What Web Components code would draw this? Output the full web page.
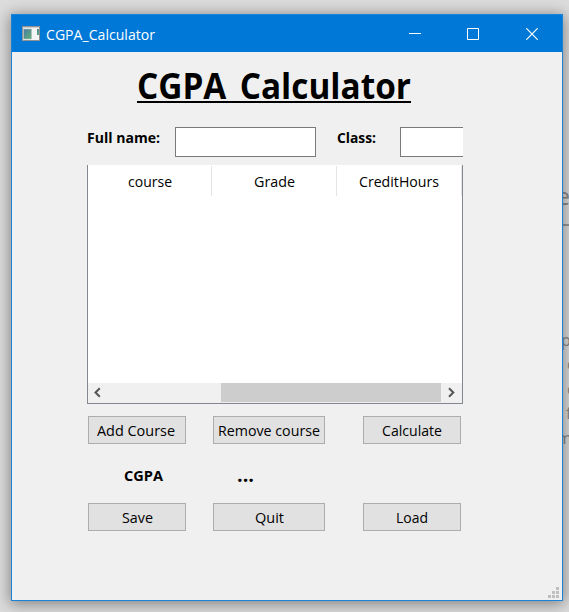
<!DOCTYPE html>
<html lang="en"><head><meta charset="utf-8"><title>CGPA_Calculator</title>
<style>
html,body{margin:0;height:100%;overflow:hidden}
body{font:15px/20px "Open Sans","Noto Sans",sans-serif;color:#000}
</style></head><body>
<cgpa-desktop></cgpa-desktop>
<script>
const define=(name,html,after)=>customElements.define(name,class extends HTMLElement{
  connectedCallback(){
    if(this.shadowRoot)return;
    this.attachShadow({mode:'open'}).innerHTML=html;
    if(after)after(this);
  }
});

/* Text condensed or widened to the width in its "w" attribute */
define('fit-text',`<style>:host{display:block;white-space:nowrap;overflow:visible}span{display:inline-block;transform-origin:0 50%}</style><span><slot></slot></span>`,el=>{
  const w=+el.getAttribute('w'),s=el.shadowRoot.querySelector('span');
  el.style.width=w+'px';
  s.style.transform='scaleX('+w/s.getBoundingClientRect().width+')';
});

define('push-button',`<style>:host{display:flex;box-sizing:border-box;height:28px;border:1px solid #adadad;background:#e1e1e1;align-items:center;justify-content:center}</style><slot></slot>`);

define('line-edit',`<style>:host{display:block;box-sizing:border-box;height:30px;border:1px solid #7a7a7a;background:#fff}:host([cut]){border-right:0}</style>`);

define('title-bar',`<style>
:host{display:flex;height:37px;background:#0078d7;color:#fff;align-items:center;padding:0 9px 0 10px}
.app{margin-right:6px}.min{margin-left:auto}.max{margin-left:46px}.x{margin-left:47px}svg{display:block;flex:none}
</style>
<svg class="app" width="18" height="15" viewBox="0 0 18 15"><defs><linearGradient id="g" x1="0" y1="0" x2="1" y2="1"><stop stop-color="#4779a4"/><stop offset="1" stop-color="#63b477"/></linearGradient></defs><rect width="18" height="15" fill="#929292"/><rect x="1" y="1" width="16" height="13" fill="#f4f4f4"/><rect x="1" y="1" width="16" height="1" fill="#ccc"/><rect x="1.5" y="3" width="8" height="10" fill="url(#g)" stroke="#b3bdc0" stroke-width=".6"/><rect x="15" y="3" width="2" height="6" fill="url(#g)"/></svg>
<fit-text w="109">CGPA_Calculator</fit-text>
<svg class="min" width="12" height="12"><path d="M0 5.5H12" stroke="#fff"/></svg>
<svg class="max" width="12" height="12"><path d="M.5.5H11.5V11.5H.5Z" fill="none" stroke="#fff"/></svg>
<svg class="x" width="12" height="12" style="margin-right:15px"><path d="M.3.3 11.7 11.7M11.7.3.3 11.7" stroke="#fff" stroke-width="1.2"/></svg>`);

define('scroll-bar',`<style>
:host{display:flex;height:20px;background:#f0f0f0;box-sizing:border-box;padding-bottom:1px}
i{display:block;margin-left:112px;width:220px;background:#cdcdcd}
svg{display:block;flex:none}
</style>
<svg width="21" height="19"><path d="M12.3 5.3 8 9.5 12.3 13.7" transform="translate(-.5 0)" fill="none" stroke="#555" stroke-width="2"/></svg><i></i>
<svg width="21" height="19"><path d="M8 5.3 12.3 9.5 8 13.7" fill="none" stroke="#555" stroke-width="2"/></svg>`);

define('course-table',`<style>
:host{display:flex;flex-direction:column;box-sizing:border-box;height:239px;border:1px solid #828790;border-top:0;background:#fff}
header{display:flex;height:30px;margin-top:1px}
header div{box-sizing:border-box;width:125px;border-right:1px solid #e5e5e5;display:flex;align-items:center;justify-content:center}
header div:first-child{width:124px}
scroll-bar{margin-top:auto}
</style>
<header><div><fit-text w="44">course</fit-text></div><div><fit-text w="41">Grade</fit-text></div><div><fit-text w="80">CreditHours</fit-text></div></header>
<scroll-bar></scroll-bar>`);

define('calculator-form',`<style>
:host{display:block;padding:13px 0 0 75px;width:376px}
h1{margin:0 0 23px 50px;width:274px;height:39px;box-sizing:border-box;font-size:36px;line-height:41px;word-spacing:5px;background:linear-gradient(#000,#000) 0 36px/274px 2px no-repeat}
b{font-weight:700}
.fields{display:grid;grid-template-columns:88px 141px 21px 63px 63px;height:38px;align-items:start}
.fields>:nth-child(3){grid-column:4}
.buttons{display:grid;grid-template-columns:98px 112px 98px;column-gap:27px;margin:12px 0 0 1px}
.buttons>:last-child{margin-left:11px;margin-right:-11px}
.add{padding-right:3px}
.result{display:flex;height:20px;margin:21px 0 0 37px;font-weight:700}
.dots{margin-left:74px;font-size:20px;line-height:20px}
.bottom{margin-top:18px}
</style>
<h1><fit-text w="274">CGPA Calculator</fit-text></h1>
<div class="fields"><b><fit-text w="73">Full name:</fit-text></b><line-edit></line-edit><b><fit-text w="39">Class:</fit-text></b><line-edit cut></line-edit></div>
<course-table></course-table>
<div class="buttons"><push-button class="add"><fit-text w="78">Add Course</fit-text></push-button><push-button><fit-text w="102">Remove course</fit-text></push-button><push-button><fit-text w="60">Calculate</fit-text></push-button></div>
<div class="result"><fit-text w="39">CGPA</fit-text><fit-text class="dots" w="17">...</fit-text></div>
<div class="buttons bottom"><push-button><fit-text w="31">Save</fit-text></push-button><push-button><fit-text w="29">Quit</fit-text></push-button><push-button><fit-text w="32">Load</fit-text></push-button></div>`);

define('app-window',`<style>
:host{display:block;position:relative;box-sizing:border-box;width:552px;height:587px;border:1px solid #1883d7;background:#f0f0f0;box-shadow:0 2px 14px 1px rgba(0,0,0,.42)}
.grip{position:absolute;right:3px;bottom:2px}
</style><title-bar></title-bar><calculator-form></calculator-form>
<svg class="grip" width="11" height="11" fill="#bfbfbf"><path d="M8 0h3v3H8zM4 4h3v3H4zM8 4h3v3H8zM0 8h3v3H0zM4 8h3v3H4zM8 8h3v3H8z"/></svg>`);

/* Desktop: a page behind the window shows at the right edge */
define('cgpa-desktop',`<style>
:host{display:block;position:relative;box-sizing:border-box;width:569px;height:612px;padding:14px 0 0 11px;background:#dcdcdc;overflow:hidden}
.behind{position:absolute;color:#888;line-height:20px}
.rule{position:absolute;left:560px;top:224px;width:9px;height:2px;background:#999}
</style>
<span class="behind" style="left:557px;top:186px;font-size:23px">e</span><div class="rule"></div>
<span class="behind" style="left:561px;top:330px;font-size:16px">p</span>
<span class="behind" style="left:567px;top:354px;font-size:16px">o</span>
<span class="behind" style="left:567px;top:379px;font-size:16px">o</span>
<span class="behind" style="left:566px;top:403px;font-size:16px">f</span>
<span class="behind" style="left:557px;top:428px;font-size:16px">m</span>
<app-window></app-window>`);
</script></body></html>
